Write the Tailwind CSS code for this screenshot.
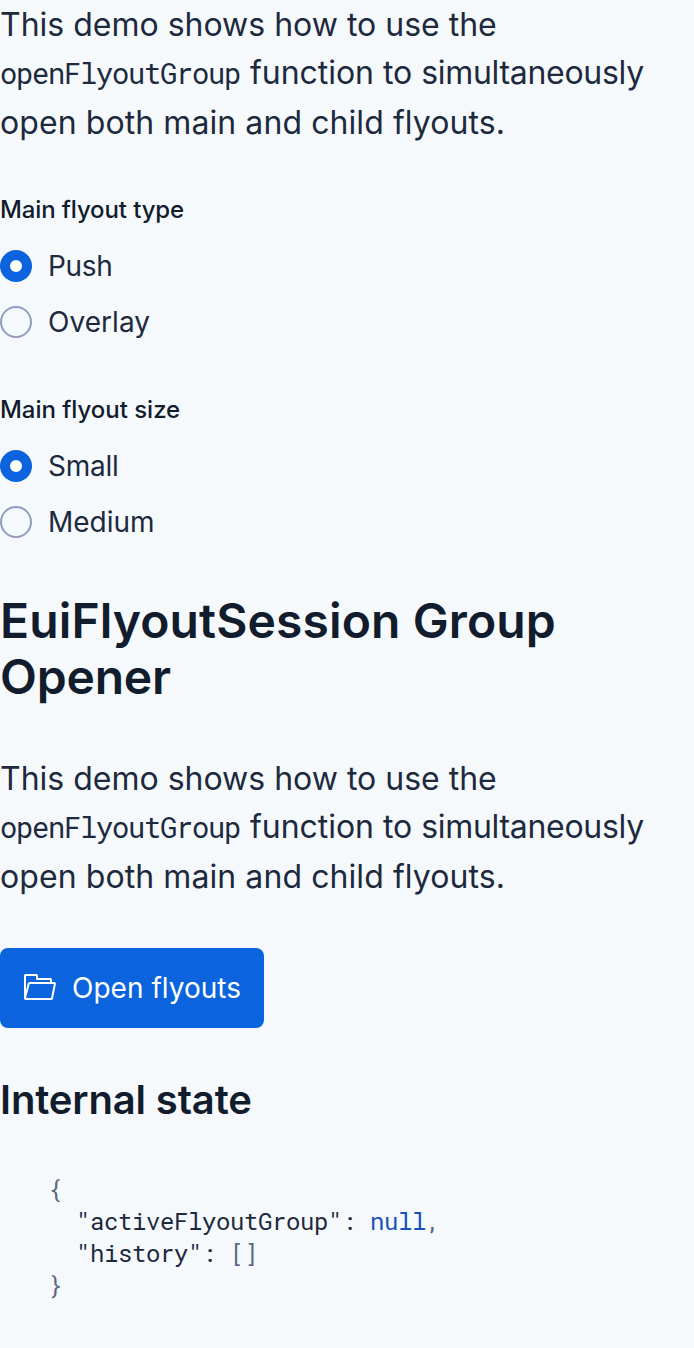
<!DOCTYPE html>
<html lang="en"><head><meta charset="utf-8"><title>EuiFlyoutSession</title>
<script src="https://cdn.jsdelivr.net/npm/@tailwindcss/browser@4"></script></head>
<body class="bg-[#f6f9fc] font-['Inter',sans-serif] text-[#1d2a3e] w-[694px] h-[1348px] overflow-hidden">
<main class="flex flex-col items-start">
<div class="text-[32px] leading-[49px] h-[190px] whitespace-nowrap"><p class="h-12">This demo shows how to use the</p><p class="h-[50px]"><code class="font-['Roboto_Mono','Liberation_Mono',monospace] text-[28.8px] leading-none tracking-[-1.28px]">openFlyoutGroup</code><span class="tracking-[1px]"> </span><span class="tracking-[-0.04px]">function to </span><span class="tracking-[-0.3px]">simultaneously</span></p><p class="tracking-[0.08px]">open both main and child flyouts.</p></div>

<fieldset class="h-[200px]">
<legend class="text-[24px] leading-[40px] font-medium text-[#111c2c] tracking-[-0.12px] mb-[20px]">Main flyout type</legend>
<label class="flex items-center gap-4 h-8 text-[28px] leading-8 tracking-[-0.35px]"><span class="size-8 rounded-full bg-[#0b64dd] flex items-center justify-center"><span class="size-3 rounded-full bg-white"></span></span>Push</label>
<label class="flex items-center gap-4 h-8 mt-6 text-[28px] leading-8 tracking-[0.05px]"><span class="size-8 rounded-full border-2 border-[#8e9fbc]"></span>Overlay</label>
</fieldset>
<fieldset class="h-[203px]">
<legend class="text-[24px] leading-[40px] font-medium text-[#111c2c] tracking-[-0.03px] mb-[20px]">Main flyout size</legend>
<label class="flex items-center gap-4 h-8 text-[28px] leading-8 tracking-[-0.25px]"><span class="size-8 rounded-full bg-[#0b64dd] flex items-center justify-center"><span class="size-3 rounded-full bg-white"></span></span>Small</label>
<label class="flex items-center gap-4 h-8 mt-6 text-[28px] leading-8"><span class="size-8 rounded-full border-2 border-[#8e9fbc]"></span>Medium</label>
</fieldset>

<h2 class="text-[48px] leading-[56px] font-semibold text-[#111c2c] tracking-[0.12px] h-[161px]">EuiFlyoutSession Group<br><span class="tracking-[-0.2px]">Opener</span></h2>

<div class="text-[32px] leading-[49px] h-[194px] whitespace-nowrap"><p class="h-12">This demo shows how to use the</p><p class="h-[50px]"><code class="font-['Roboto_Mono','Liberation_Mono',monospace] text-[28.8px] leading-none tracking-[-1.28px]">openFlyoutGroup</code><span class="tracking-[1px]"> </span><span class="tracking-[-0.04px]">function to </span><span class="tracking-[-0.3px]">simultaneously</span></p><p class="tracking-[0.08px]">open both main and child flyouts.</p></div>

<button class="flex items-center gap-4 w-[264px] h-20 px-6 rounded-[8px] bg-[#0b64dd] text-white text-[28px] leading-none font-normal tracking-[0.02px] whitespace-nowrap">
<svg class="size-8 shrink-0" viewBox="0 0 32 32" fill="none" stroke="currentColor" stroke-width="2" stroke-linejoin="round"><path d="M1 27V3.500a.5.500 0 0 1 .5-.5H12.500a.5.500 0 0 1 .5.500V7h13.500a.5.500 0 0 1 .5.500V11"/><path d="M5.600 11H30.200a.7.700 0 0 1 .7.900L28 26.400a.8.800 0 0 1-.8.600H1.700a.7.700 0 0 1-.7-.9l3.700-14.400a1 1 0 0 1 .9-.7Z"/></svg>
<span>Open flyouts</span></button>

<h3 class="mt-[48px] text-[40px] leading-[48px] font-semibold text-[#111c2c] tracking-[-0.15px]">Internal state</h3>
<pre class="mt-[49px] ml-12 font-['Roboto_Mono','Liberation_Mono',monospace] text-[24px] leading-8 tracking-[-0.4px]"><span class="text-[#5a6880]">{</span>
  "activeFlyoutGroup": <span class="text-[#1750ba]">null</span><span class="text-[#5a6880]">,</span>
  "history": <span class="text-[#5a6880]">[]</span>
<span class="text-[#5a6880]">}</span></pre>
</main>
</body></html>
